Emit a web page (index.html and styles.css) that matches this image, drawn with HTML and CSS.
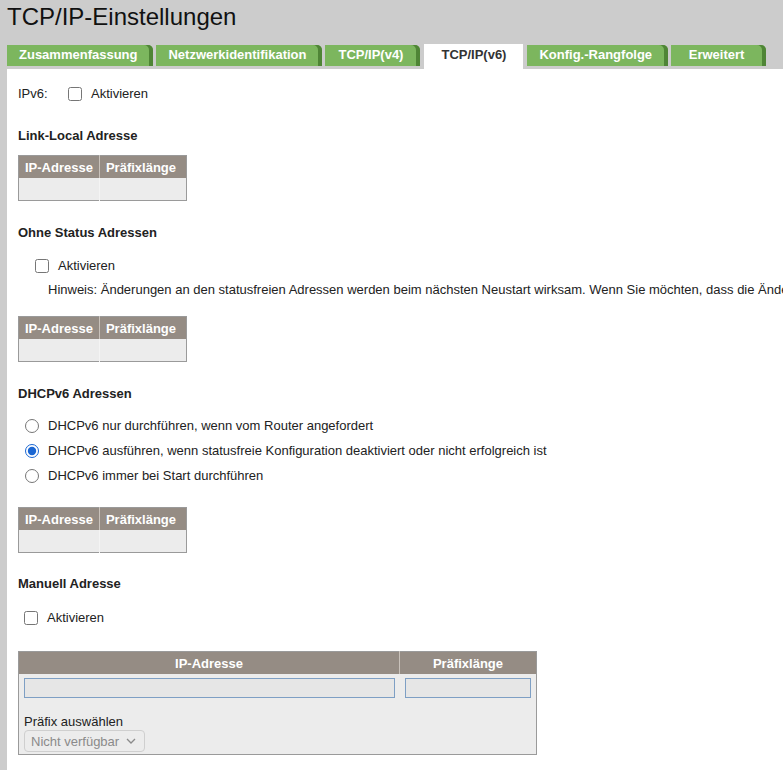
FILE: index.html
```html
<!DOCTYPE html>
<html lang="de">
<head>
    <meta charset="UTF-8">
    <title>TCP/IP-Einstellungen</title>
    <link rel="stylesheet" href="styles.css">
</head>
<body>
    <header class="page-head">
        <h1>TCP/IP-Einstellungen</h1>
        <nav class="tabs">
            <a class="tab" href="#">Zusammenfassung</a>
            <a class="tab" href="#">Netzwerkidentifikation</a>
            <a class="tab" href="#">TCP/IP(v4)</a>
            <a class="tab active" href="#">TCP/IP(v6)</a>
            <a class="tab" href="#">Konfig.-Rangfolge</a>
            <a class="tab" href="#">Erweitert</a>
        </nav>
    </header>

    <main class="panel">
        <div class="row">
            <span class="row-label">IPv6:</span>
            <label class="check"><input type="checkbox"> Aktivieren</label>
        </div>

        <!-- Link-Local -->
        <h3 class="section-title first">Link-Local Adresse</h3>
        <table class="addr-table">
            <tr><th class="col-a">IP-Adresse</th><th class="col-b">Präfixlänge</th></tr>
            <tr><td></td><td></td></tr>
        </table>

        <!-- Stateless -->
        <h3 class="section-title">Ohne Status Adressen</h3>
        <div class="row indent">
            <label class="check"><input type="checkbox"> Aktivieren</label>
        </div>
        <p class="hint">Hinweis: Änderungen an den statusfreien Adressen werden beim nächsten Neustart wirksam. Wenn Sie möchten, dass die Änderungen sofort wirksam werden, starten Sie das Gerät neu.</p>
        <table class="addr-table after-hint">
            <tr><th class="col-a">IP-Adresse</th><th class="col-b">Präfixlänge</th></tr>
            <tr><td></td><td></td></tr>
        </table>

        <!-- DHCPv6 -->
        <h3 class="section-title">DHCPv6 Adressen</h3>
        <div class="radios">
            <label class="radio"><input type="radio" name="dhcp"> DHCPv6 nur durchführen, wenn vom Router angefordert</label>
            <label class="radio"><input type="radio" name="dhcp" checked> DHCPv6 ausführen, wenn statusfreie Konfiguration deaktiviert oder nicht erfolgreich ist</label>
            <label class="radio"><input type="radio" name="dhcp"> DHCPv6 immer bei Start durchführen</label>
        </div>
        <table class="addr-table spaced">
            <tr><th class="col-a">IP-Adresse</th><th class="col-b">Präfixlänge</th></tr>
            <tr><td></td><td></td></tr>
        </table>

        <!-- Manual -->
        <h3 class="section-title last">Manuell Adresse</h3>
        <div class="row small-indent">
            <label class="check"><input type="checkbox"> Aktivieren</label>
        </div>
        <table class="addr-table manual">
            <tr><th class="col-ip">IP-Adresse</th><th class="col-prefix">Präfixlänge</th></tr>
            <tr>
                <td><input class="field" type="text" disabled></td>
                <td><input class="field" type="text" disabled></td>
            </tr>
            <tr>
                <td colspan="2" class="prefix-cell">
                    <div class="prefix-label">Präfix auswählen</div>
                    <div class="select-box">
                        <select disabled><option>Nicht verfügbar</option></select>
                        <svg width="10" height="6" viewBox="0 0 10 6"><path d="M1 1l4 4 4-4" fill="none" stroke="#8a8a8a" stroke-width="1.3"/></svg>
                    </div>
                </td>
            </tr>
        </table>
    </main>
</body>
</html>
```

FILE: styles.css
```css
html {
    overflow: hidden;
}
body {
    margin: 0;
    background-color: #cccccc;
    font-family: "Liberation Sans", Arial, sans-serif;
    font-size: 13px;
    color: #222;
}
.page-head {
    padding: 4px 0 0 7px;
}
.page-head h1 {
    margin: 0;
    font-size: 24px;
    font-weight: normal;
    line-height: 26px;
    color: #111;
}

/* tab strip */
.tabs {
    display: flex;
    align-items: flex-start;
    gap: 3px;
    margin-top: 14px;
    height: 25px;
}
.tab {
    display: block;
    box-sizing: border-box;
    min-width: 95px;
    height: 21px;
    line-height: 19px;
    margin-top: 1px;
    padding: 0 16px 0 12px;
    background-color: #7cb65e;
    box-shadow: inset -4px 0 0 #4f8536;
    border-top-right-radius: 5px;
    color: #fff;
    font-weight: bold;
    text-align: center;
    text-decoration: none;
    white-space: nowrap;
}
.tab.active {
    min-width: 99px;
    height: 25px;
    margin: 0 1px;
    padding: 0 14px;
    line-height: 22px;
    background-color: #fff;
    box-shadow: none;
    border-radius: 0;
    color: #333;
}

/* main white area */
.panel {
    margin-left: 7px;
    padding: 17px 11px 15px;
    background-color: #fff;
    white-space: nowrap;
}
.row {
    display: flex;
    align-items: center;
    height: 16px;
    line-height: 16px;
}
.row-label {
    width: 50px;
}
.row.indent {
    margin-top: 17px;
    padding-left: 17px;
}
.row.small-indent {
    margin-top: 18px;
    padding-left: 6px;
}
.check,
.radio {
    display: flex;
    align-items: center;
}
.check input {
    width: 14px;
    height: 14px;
    margin: 0 9px 0 0;
}
.radio input {
    width: 14px;
    height: 14px;
    margin: 0 9px 0 7px;
    accent-color: #1a66d2;
}
.section-title {
    margin: 24px 0 0;
    font-size: 13px;
    line-height: 16px;
    color: #222;
}
.section-title.first {
    margin-top: 26px;
}
.section-title.last {
    margin-top: 23px;
}
.hint {
    margin: 8px 0 0 30px;
    line-height: 16px;
}
.radios {
    display: flex;
    flex-direction: column;
    gap: 9px;
    margin-top: 16px;
    line-height: 16px;
}

/* address tables */
.addr-table {
    margin-top: 11px;
    border-collapse: collapse;
    border: 1px solid #9a9a9a;
}
.addr-table.after-hint {
    margin-top: 18px;
}
.addr-table.spaced {
    margin-top: 23px;
}
.addr-table.manual {
    margin-top: 25px;
}
.addr-table th {
    height: 22px;
    padding: 0 6px;
    background-color: #958c84;
    color: #fff;
    font-weight: bold;
    text-align: left;
    border-left: 1px solid #c9c2bb;
}
.addr-table th:first-child {
    border-left: none;
}
.addr-table .col-a {
    width: 67px;
}
.addr-table .col-b {
    width: 74px;
}
.addr-table td {
    height: 22px;
    padding: 0;
    background-color: #ececec;
    border-left: 1px solid #f4f4f4;
}
.addr-table td:first-child {
    border-left: none;
}
.manual th {
    text-align: center;
}
.manual .col-ip {
    width: 368px;
}
.manual .col-prefix {
    width: 124px;
}
.manual td {
    padding: 4px 5px 3px 5px;
    height: auto;
    border-left: none;
}
.field {
    display: block;
    box-sizing: border-box;
    width: 100%;
    height: 20px;
    margin: 0;
    border: 1px solid #7e9fc4;
    background-color: #e6e6e6;
}
.manual .prefix-cell {
    padding: 13px 5px 2px;
}
.prefix-label {
    line-height: 16px;
}
.select-box {
    display: flex;
    align-items: center;
    justify-content: space-between;
    box-sizing: border-box;
    width: 121px;
    height: 22px;
    padding: 0 8px 0 6px;
    border: 1px solid #cfcfcf;
    border-radius: 4px;
    background-color: #ececec;
}
.select-box select {
    appearance: none;
    border: none;
    background: transparent;
    padding: 0;
    font-family: "Liberation Sans", Arial, sans-serif;
    font-size: 13px;
    color: #8a8a8a;
    opacity: 1;
}
```
